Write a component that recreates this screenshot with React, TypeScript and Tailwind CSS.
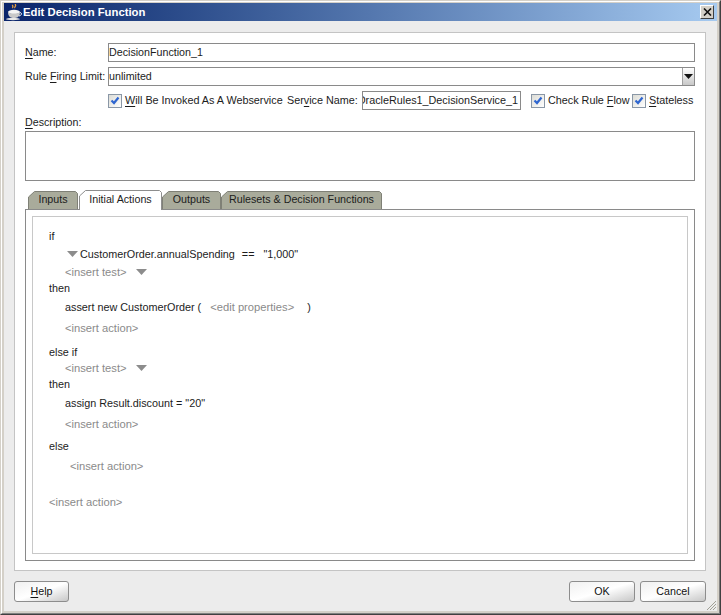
import React from "react";

const font = { fontFamily: '"Liberation Sans", Arial, sans-serif' };

function U({ children }: { children: React.ReactNode }) {
  return <span className="underline underline-offset-2 decoration-1">{children}</span>;
}

function Check() {
  return (
    <span className="flex h-[14px] w-[14px] shrink-0 items-center justify-center border border-[#8a97a6] bg-gradient-to-br from-[#dcdcd6] to-white">
      <svg width="10" height="9" viewBox="0 0 10 9">
        <path d="M1.5 4.5 L4 7 L8.5 1.5" fill="none" stroke="#2f66d0" strokeWidth="2.2" />
      </svg>
    </span>
  );
}

function Arrow({ className }: { className: string }) {
  return (
    <svg width="11" height="6" viewBox="0 0 11 6" className={className}>
      <path d="M0 0H11L5.5 6Z" fill="#8c8c8c" />
    </svg>
  );
}

function Tab({ w, active, children, ml }: { w: number; active?: boolean; children: React.ReactNode; ml: string }) {
  const h = active ? 20 : 18;
  return (
    <div className={`relative flex items-center justify-center text-[#1c1c1c] ${ml} ${active ? "z-10 -mb-px h-[20px]" : "h-[18px]"}`} style={{ width: w }}>
      <svg width={w} height={h} className="absolute left-0 top-0">
        <path
          d={`M0.5 ${h}V6L6.5 0.5H${w - 2.5}L${w - 0.5} 2.5V${h}`}
          fill={active ? "#ffffff" : "#a9ab9b"}
          stroke={active ? "#8d8d8d" : "#7f8076"}
        />
      </svg>
      <span className={`relative ${active ? "pb-[3px]" : "pb-[2px]"}`}>{children}</span>
    </div>
  );
}

function Btn({ w, children }: { w: string; children: React.ReactNode }) {
  return (
    <button className={`flex h-[21px] ${w} items-center justify-center rounded-[3px] border border-[#8d8d8d] bg-gradient-to-br from-[#f0f0f0] via-[#ffffff] to-[#c8c8c8] pb-[2px] text-[#111]`}>
      {children}
    </button>
  );
}

function Ins({ children, cls }: { children: React.ReactNode; cls: string }) {
  return <div className={`flex h-[16px] items-center text-[11.2px] leading-[16px] text-[#8a8a8a] ${cls}`}>{children}</div>;
}

function Line({ children, cls }: { children: React.ReactNode; cls: string }) {
  return <div className={`flex h-[16px] items-center leading-[16px] text-[#1c1c1c] ${cls}`}>{children}</div>;
}

export default function App() {
  return (
    <div className="h-[615px] w-[721px] border-t border-l border-r border-b border-t-[#d4d0c8] border-l-[#d4d0c8] border-r-[#404040] border-b-[#404040] text-[10.7px] leading-[14px]" style={font}>
      <div className="h-full border-t border-l border-r border-b border-t-white border-l-white border-r-[#808080] border-b-[#808080]">
        <div className="relative flex h-full flex-col border-x-2 border-b-2 border-t border-[#d4d0c8] bg-[#ececec]">
          <div className="flex h-[18px] shrink-0 items-center bg-gradient-to-r from-[#0a246a] to-[#a6caf0] pl-[1px] pr-[3px]">
            <svg width="18" height="17" viewBox="0 0 18 17" className="shrink-0">
              <path d="M7 1c2 1 0 2 1 3M10 0c2 2-1 3 0 4" fill="none" stroke="#e8a040" strokeWidth="1.3" />
              <ellipse cx="9" cy="8" rx="6" ry="2.2" fill="#f4f4f4" />
              <path d="M3 8c0 5 3 6 6 6s6-1 6-6c-2 2-10 2-12 0Z" fill="#c8c8c8" />
              <path d="M15 8.5c2 0 2 3-1 3.5" fill="none" stroke="#ffffff" />
              <ellipse cx="8" cy="15" rx="7" ry="1.2" fill="#e8e8e8" />
            </svg>
            <span className="flex-1 text-[11.3px] font-bold text-white">Edit Decision Function</span>
            <div className="flex h-[14px] w-[14px] items-center justify-center border border-t-white border-l-white border-r-[#404040] border-b-[#404040] bg-[#d4d0c8]">
              <svg width="9" height="8" viewBox="0 0 9 8">
                <path d="M1 0.5L8 7.5M8 0.5L1 7.5" stroke="#111" strokeWidth="1.6" />
              </svg>
            </div>
          </div>

          <div className="ml-[10px] mr-[11px] mt-[11px] h-[539px] border border-[#c4c4c4] bg-white px-[10px] pt-[10px] text-[#1c1c1c]">
            <div className="flex h-[19px] items-center">
              <span className="w-[83px] pb-[2px]"><U>N</U>ame:</span>
              <div className="flex h-[19px] flex-1 items-center border border-[#8a8a8a] pb-[2px]">DecisionFunction_1</div>
            </div>
            <div className="mt-[5px] flex h-[19px] items-center">
              <span className="w-[83px] whitespace-nowrap pb-[2px]">Rule <U>F</U>iring Limit:</span>
              <div className="flex h-[19px] flex-1 items-center justify-between border border-[#8a8a8a]">
                <span className="pb-[2px]">unlimited</span>
                <div className="flex h-[17px] w-[12px] items-center justify-center border-l border-[#a0a0a0] bg-gradient-to-b from-white to-[#c8c8c8]">
                  <svg width="9" height="5" viewBox="0 0 9 5"><path d="M0 0H9L4.5 5Z" fill="#111" /></svg>
                </div>
              </div>
            </div>
            <div className="ml-[83px] mt-[5px] flex h-[19px] items-center whitespace-nowrap text-[10.8px]">
              <Check />
              <span className="ml-[3px] w-[162px] pb-[2px]"><U>W</U>ill Be Invoked As A Webservice</span>
              <span className="w-[75px] pb-[2px]">Ser<U>v</U>ice Name:</span>
              <div className="flex h-[19px] w-[159px] shrink-0 items-center justify-end overflow-hidden border border-[#8a8a8a] pb-[2px] pr-[2px]">
                <span>OracleRules1_DecisionService_1</span>
              </div>
              <span className="ml-[10px]"><Check /></span>
              <span className="ml-[3px] w-[84px] pb-[2px]">Check Rule <U>F</U>low</span>
              <Check />
              <span className="ml-[3px] pb-[2px]"><U>S</U>tateless</span>
            </div>
            <div className="mt-[5px] h-[14px]"><U>D</U>escription:</div>
            <div className="mt-[2px] h-[50px] border border-[#8a8a8a]" />

            <div className="ml-[3px] mt-[9px] flex items-end">
              <Tab w={50} ml="ml-0">Inputs</Tab>
              <Tab w={83} ml="ml-[1px]" active>Initial Actions</Tab>
              <Tab w={59} ml="ml-0">Outputs</Tab>
              <Tab w={161} ml="ml-0">Rulesets &amp; Decision Functions</Tab>
            </div>
            <div className="h-[352px] border border-[#8a8a8a] p-[6px]">
              <div className="h-full border border-[#c8c8c8] pl-[16px] pt-[11px] text-[10.8px]">
                <Line cls="">if</Line>
                <Line cls="mt-[2px] pl-[18px]"><Arrow className="mr-[2px]" />CustomerOrder.annualSpending<span className="ml-[7px]">==</span><span className="ml-[9px]">"1,000"</span></Line>
                <Ins cls="mt-[2px] pl-[16px]">&lt;insert test&gt;<Arrow className="ml-[9px]" /></Ins>
                <Line cls="">then</Line>
                <Line cls="mt-[3px] pl-[16px]">assert new CustomerOrder (<span className="ml-[9px] text-[11.2px] text-[#8a8a8a]">&lt;edit properties&gt;</span><span className="ml-[13px]">)</span></Line>
                <Ins cls="mt-[5px] pl-[16px]">&lt;insert action&gt;</Ins>
                <Line cls="mt-[8px]">else if</Line>
                <Ins cls="pl-[16px]">&lt;insert test&gt;<Arrow className="ml-[9px]" /></Ins>
                <Line cls="">then</Line>
                <Line cls="mt-[3px] pl-[16px]">assign Result.discount = "20"</Line>
                <Ins cls="mt-[5px] pl-[16px]">&lt;insert action&gt;</Ins>
                <Line cls="mt-[6px]">else</Line>
                <Ins cls="mt-[4px] pl-[21px]">&lt;insert action&gt;</Ins>
                <Ins cls="mt-[20px]">&lt;insert action&gt;</Ins>
              </div>
            </div>
          </div>

          <div className="ml-[10px] mr-[11px] mt-[10px] flex justify-between">
            <Btn w="w-[55px]"><span><U>H</U>elp</span></Btn>
            <div className="flex gap-[5px]">
              <Btn w="w-[66px]">OK</Btn>
              <Btn w="w-[66px]">Cancel</Btn>
            </div>
          </div>

          <svg width="12" height="12" viewBox="0 0 12 12" className="absolute bottom-0 right-0">
            <path d="M11 2L2 11M11 5L5 11M11 8L8 11" stroke="#a0a096" strokeWidth="1" />
          </svg>
        </div>
      </div>
    </div>
  );
}
